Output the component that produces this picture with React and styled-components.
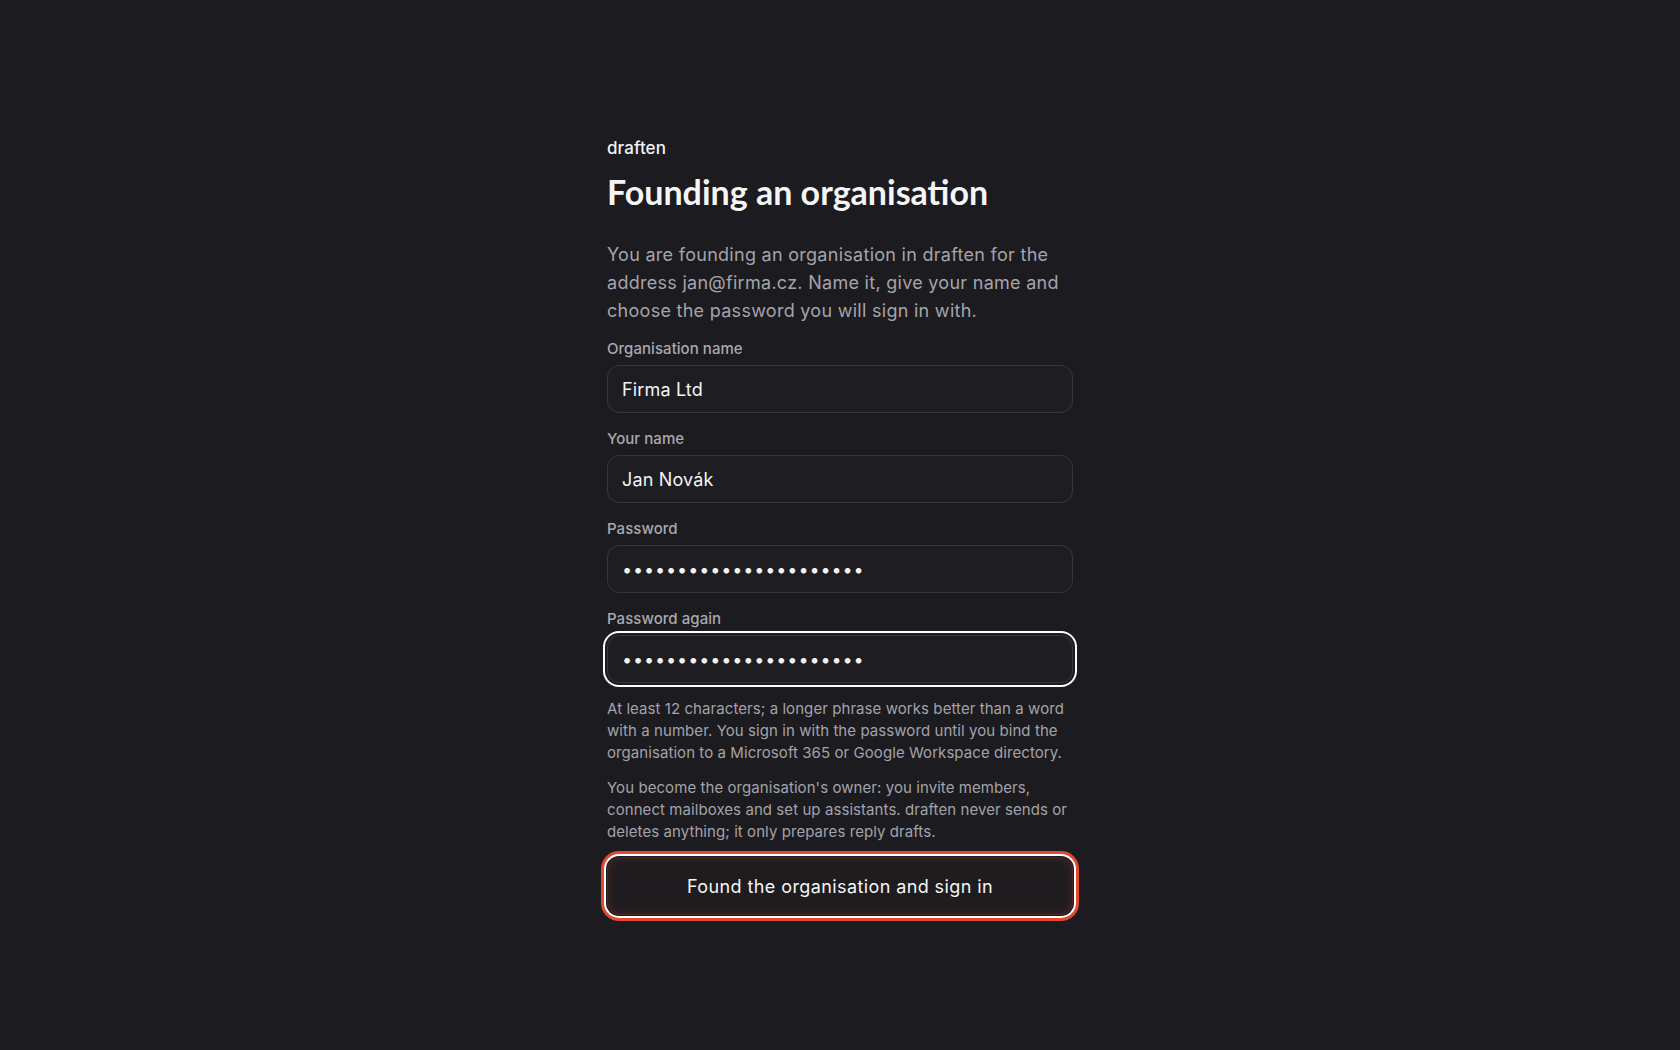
import styled, { createGlobalStyle } from "styled-components";

const GlobalStyle = createGlobalStyle`
  * { box-sizing: border-box; }
  html, body {
    margin: 0;
    background: #1c1b1f;
  }
  body {
    font-family: Inter, "Noto Sans", sans-serif;
    color: #f4f4f5;
  }
`;

const Page = styled.main`
  min-height: 100vh;
  display: flex;
  justify-content: center;
  padding: 136px 0 80px;
`;

const Card = styled.div`
  width: 466px;
  display: flex;
  flex-direction: column;
`;

const Brand = styled.div`
  font-size: 17px;
  line-height: 24px;
  font-weight: 500;
  letter-spacing: 0.1px;
  color: #f2f2f3;
`;

const Title = styled.h1`
  margin: 11px 0 0;
  font-family: Lato, "Open Sans", sans-serif;
  font-size: 34px;
  line-height: 42px;
  font-weight: 700;
  letter-spacing: 0;
  color: #f5f5f6;
`;

const Lead = styled.p`
  margin: 28px 0 0;
  font-size: 18px;
  line-height: 28px;
  letter-spacing: 0.28px;
  color: #a4a4ab;
`;

const Form = styled.form`
  margin-top: 14px;
  display: flex;
  flex-direction: column;
  gap: 16px;
`;

const Field = styled.label`
  display: flex;
  flex-direction: column;
  gap: 6px;
`;

const LabelText = styled.span`
  font-size: 15px;
  line-height: 20px;
  font-weight: 500;
  letter-spacing: 0.05px;
  color: #a9a9b0;
`;

const Input = styled.input`
  width: 100%;
  height: 48px;
  padding: 0 14px;
  border: 1px solid #37363c;
  border-radius: 12px;
  background: #1e1d21;
  color: #f4f4f5;
  font-family: Inter, sans-serif;
  font-size: 18px;
  outline: none;
  letter-spacing: ${({ type }) => (type === "password" ? "0.9px" : "0.15px")};
  box-shadow: ${({ $focused }) =>
    $focused ? "0 0 0 2px #1c1b1f, 0 0 0 4px #ffffff" : "none"};
`;

const Hint = styled.p`
  margin: 0;
  font-size: 15px;
  line-height: 22px;
  letter-spacing: 0.07px;
  color: #a3a3aa;
`;

const Notes = styled.div`
  margin-top: -1px;
  display: flex;
  flex-direction: column;
  gap: 13px;
`;

const Submit = styled.button`
  margin-top: -2px;
  height: 58px;
  width: 100%;
  border: 1px solid #4a2723;
  border-radius: 12px;
  background: #1e1c1f;
  color: #f6f6f7;
  font-family: Inter, sans-serif;
  font-size: 18px;
  font-weight: 400;
  letter-spacing: 0.4px;
  cursor: pointer;
  box-shadow: inset 0 0 8px rgba(226, 73, 47, 0.22), 0 0 0 1px #1c1b1f,
    0 0 0 3px #ffffff, 0 0 0 6px #e2492f;
`;

export default function App() {
  return (
    <>
      <GlobalStyle />
      <Page>
        <Card>
          <Brand>draften</Brand>
          <Title>Founding an organisation</Title>
          <Lead>
            You are founding an organisation in draften for the address
            jan@firma.cz. Name it, give your name and choose the password you
            will sign in with.
          </Lead>
          <Form onSubmit={(e) => e.preventDefault()}>
            <Field>
              <LabelText>Organisation name</LabelText>
              <Input type="text" defaultValue="Firma Ltd" />
            </Field>
            <Field>
              <LabelText>Your name</LabelText>
              <Input type="text" defaultValue="Jan Novák" />
            </Field>
            <Field>
              <LabelText>Password</LabelText>
              <Input type="password" defaultValue="abcdefghijklmnopqrstuv" />
            </Field>
            <Field>
              <LabelText>Password again</LabelText>
              <Input
                type="password"
                defaultValue="abcdefghijklmnopqrstuv"
                $focused
              />
            </Field>
            <Notes>
              <Hint>
                At least 12 characters; a longer phrase works better than a
                word with a number. You sign in with the password until you
                bind the organisation to a Microsoft 365 or Google Workspace
                directory.
              </Hint>
              <Hint>
                You become the organisation's owner: you invite members,
                connect mailboxes and set up assistants. draften never sends or
                deletes anything; it only prepares reply drafts.
              </Hint>
            </Notes>
            <Submit type="submit">Found the organisation and sign in</Submit>
          </Form>
        </Card>
      </Page>
    </>
  );
}
